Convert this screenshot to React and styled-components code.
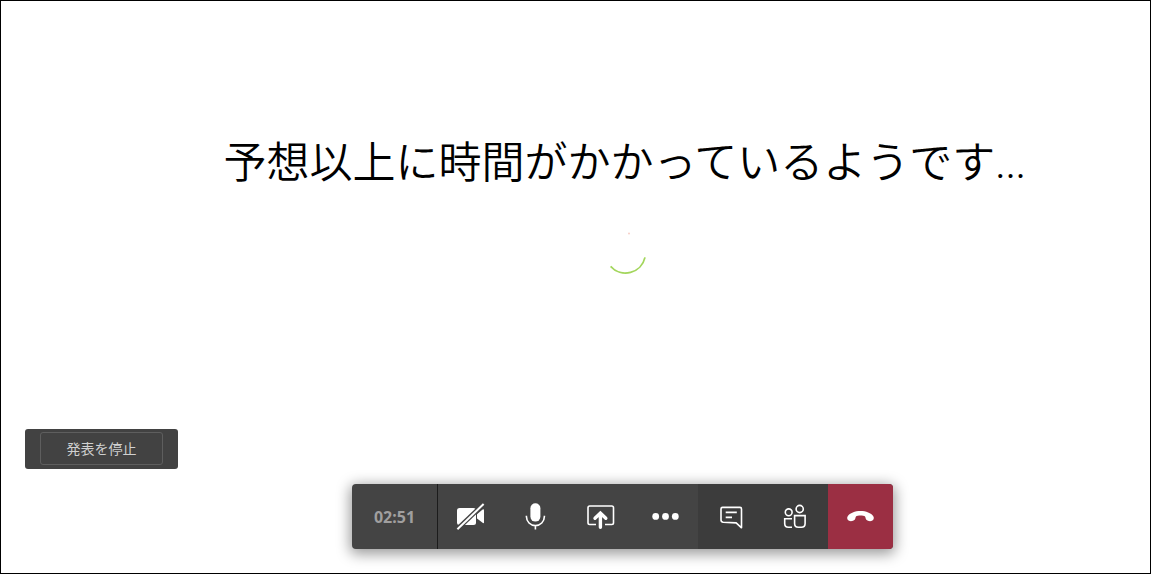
import React from "react";
import styled, { createGlobalStyle, css } from "styled-components";

const GlobalStyle = createGlobalStyle`
  * {
    box-sizing: border-box;
  }
  body {
    margin: 0;
    background: #ffffff;
    font-family: "Noto Sans", "Noto Sans CJK JP", sans-serif;
  }
`;

const Page = styled.div`
  display: flex;
  flex-direction: column;
  min-height: 100vh;
  padding: 133px 0 24px;
  border: 1px solid #000000;
`;

const Stage = styled.main`
  display: flex;
  flex-direction: column;
  align-items: center;
  gap: 42px;
  padding-left: 98px;
`;

const Message = styled.h1`
  margin: 0;
  font-family: Lato, "Noto Sans CJK JP", sans-serif;
  font-size: 43px;
  font-weight: 350;
  line-height: 56px;
  text-align: center;
  color: #000000;
`;

const Spinner = styled.svg`
  display: block;
  width: 42px;
  height: 42px;
  fill: none;
`;

const Footer = styled.footer`
  display: flex;
  flex-direction: column;
  gap: 15px;
  margin-top: auto;
`;

const StopPanel = styled.div`
  align-self: flex-start;
  margin-left: 24px;
  padding: 3px 15px 4px;
  border-radius: 3px;
  background: #424242;
`;

const StopButton = styled.button`
  display: block;
  width: 123px;
  height: 33px;
  padding: 0 0 2px;
  border: 1px solid #5e5e5e;
  border-radius: 3px;
  background: transparent;
  font-family: "Noto Sans CJK JP", sans-serif;
  font-size: 14px;
  line-height: 20px;
  color: #d0d0d0;
  cursor: pointer;
`;

const ToolbarRow = styled.div`
  display: flex;
  justify-content: center;
  padding-left: 94px;
`;

const Toolbar = styled.div`
  display: flex;
  height: 65px;
  border-radius: 4px;
  overflow: hidden;
  background: #444444;
  box-shadow: 0 3px 14px 2px rgba(0, 0, 0, 0.4);
`;

const Timer = styled.div`
  display: flex;
  align-items: center;
  justify-content: center;
  width: 86px;
  border-right: 1px solid #1c1c1c;
  font-size: 16px;
  font-weight: 700;
  line-height: 24px;
  color: #a09f9f;
`;

const ToolButton = styled.button`
  display: flex;
  align-items: center;
  justify-content: center;
  width: 65px;
  padding: 0;
  border: none;
  background: transparent;
  color: #ffffff;
  cursor: pointer;

  ${({ $tone }) =>
    $tone === "dark" &&
    css`
      background: #3c3c3c;
    `}
  ${({ $tone }) =>
    $tone === "danger" &&
    css`
      background: #9b2f43;
    `}
`;

const Icon = styled.svg`
  display: block;
  width: 33px;
  height: 33px;
  fill: none;
  stroke: currentColor;
  stroke-width: 1.6;
`;

const CameraOff = () => (
  <Icon viewBox="0 0 33 33">
    <g fill="currentColor" stroke="none">
      <rect x="3" y="8" width="19" height="17" rx="2.5" />
      <path d="M23 14.2 28.6 9.6Q30 8.8 30 10.4V22.2Q30 23.8 28.6 22.8L23 18.4Z" />
    </g>
    <path d="M1.5 30.8 31.5 2.2" stroke="#444444" strokeWidth="4.6" />
    <path d="M3.4 29.3 29.6 4" strokeWidth="2" />
  </Icon>
);

const Mic = () => (
  <Icon viewBox="0 0 33 33">
    <rect x="11.4" y="3.2" width="10" height="18.4" rx="5" fill="currentColor" stroke="none" />
    <path d="M7.4 15.8v.8a9 9 0 0 0 18 0v-.8M16.4 25.6v3.8" />
  </Icon>
);

const Share = () => (
  <Icon viewBox="0 0 33 33">
    <path d="M12 24.5H5.7Q4 24.5 4 22.8V7.7Q4 6 5.7 6H27.8Q29.5 6 29.5 7.7V22.8Q29.5 24.5 27.8 24.5H21" />
    <path d="M16.4 27.2V13.5M11 18.2l5.4-5.2 5.4 5.2" strokeWidth="3.4" strokeLinecap="round" />
  </Icon>
);

const More = () => (
  <Icon viewBox="0 0 33 33">
    <g fill="currentColor" stroke="none">
      <circle cx="6.7" cy="16.4" r="3.4" />
      <circle cx="16.5" cy="16.4" r="3.4" />
      <circle cx="26.3" cy="16.4" r="3.4" />
    </g>
  </Icon>
);

const Chat = () => (
  <Icon viewBox="0 0 33 33">
    <path
      d="M8.5 7.4H26Q27.5 7.4 27.5 8.9V27.8L22.2 22.9 9.2 22.3Q7 22 7 20V9Q7 7.4 8.5 7.4Z"
      strokeLinejoin="round"
    />
    <path d="M11.7 12.4H22.8M11.7 17.4H18" />
  </Icon>
);

const People = () => (
  <Icon viewBox="0 0 33 33">
    <circle cx="20.7" cy="9" r="3.6" />
    <circle cx="9.7" cy="12.3" r="3.4" />
    <path d="M15.6 15.6H26.1V23.5Q26.1 27.2 22.4 27.2H19.3Q15.6 27.2 15.6 23.5Z" />
    <path d="M13 18.7H5.7V23.5Q5.7 27.2 9.4 27.2H13" />
  </Icon>
);

const HangUp = () => (
  <Icon viewBox="0 0 33 33">
    <path
      d="M16.5 11C22 11 27.2 13 29.3 16.2 30.4 18 29.6 20 28 20.8 26 21.6 23.6 21 22.3 19.7 21.3 18.6 21.8 17.2 20.8 16.3 19.6 15.2 13.4 15.2 12.2 16.3 11.2 17.2 11.7 18.6 10.7 19.7 9.4 21 7 21.6 5 20.8 3.4 20 2.6 18 3.7 16.2 5.8 13 11 11 16.5 11Z"
      fill="currentColor"
      stroke="none"
    />
  </Icon>
);

const tools = [
  { label: "カメラをオンにする", icon: CameraOff },
  { label: "ミュート", icon: Mic },
  { label: "共有", icon: Share },
  { label: "その他の操作", icon: More },
  { label: "会話の表示", icon: Chat, tone: "dark" },
  { label: "参加者を表示", icon: People, tone: "dark" },
  { label: "切断", icon: HangUp, tone: "danger" },
];

const App = () => {
  return (
    <>
      <GlobalStyle />
      <Page>
        <Stage>
          <Message>予想以上に時間がかかっているようです...</Message>
          <Spinner viewBox="0 0 42 42" aria-hidden="true">
            <path d="M6.6 34.4A20 20 0 0 0 41 25.4" stroke="#a3d65c" strokeWidth="1.8" />
            <circle cx="25" cy="1.6" r="1" fill="#f7cfc6" />
          </Spinner>
        </Stage>
        <Footer>
          <StopPanel>
            <StopButton type="button">発表を停止</StopButton>
          </StopPanel>
          <ToolbarRow>
            <Toolbar role="toolbar">
              <Timer>02:51</Timer>
              {tools.map(({ label, icon: ToolIcon, tone }) => (
                <ToolButton key={label} type="button" aria-label={label} $tone={tone}>
                  <ToolIcon />
                </ToolButton>
              ))}
            </Toolbar>
          </ToolbarRow>
        </Footer>
      </Page>
    </>
  );
};

export default App;
